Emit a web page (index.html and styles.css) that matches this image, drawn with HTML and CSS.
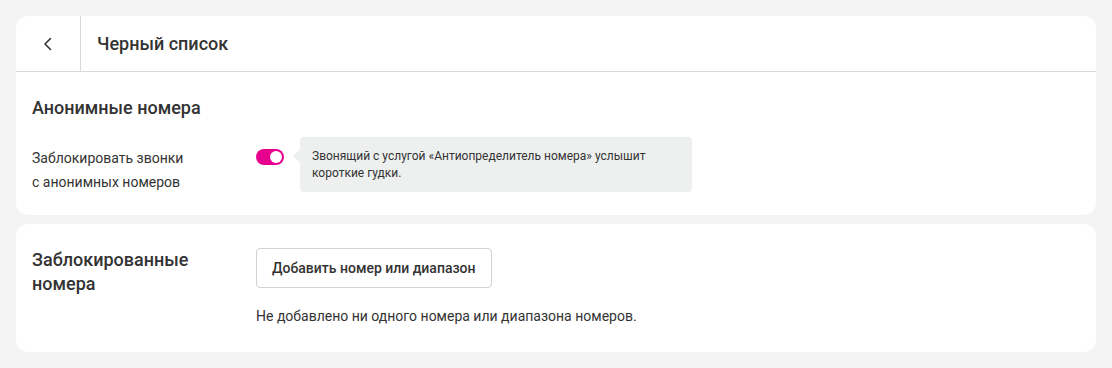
FILE: index.html
```html
<!DOCTYPE html>
<html lang="ru">
<head>
<meta charset="utf-8">
<link rel="stylesheet" href="styles.css">
</head>
<body>
<div class="page">
  <section class="card">
    <header class="card-head">
      <button class="back" aria-label="Назад">
        <svg width="16" height="16" viewBox="0 0 16 16"><path d="M10.5 2.5 L5 8 L10.5 13.5" fill="none" stroke="#333" stroke-width="1.6" stroke-linecap="round" stroke-linejoin="round"/></svg>
      </button>
      <h1 class="title">Черный список</h1>
    </header>
    <div class="card-body">
      <h2 class="section-title">Анонимные номера</h2>
      <div class="row">
        <div class="label">Заблокировать звонки<br>с анонимных номеров</div>
        <div class="control">
          <span class="toggle"><span class="knob"></span></span>
          <div class="hint">Звонящий с услугой «Антиопределитель номера» услышит<br>короткие гудки.</div>
        </div>
      </div>
    </div>
  </section>
  <section class="card card-blocked">
    <h2 class="section-title blocked-title">Заблокированные номера</h2>
    <div class="blocked-content">
      <button class="btn">Добавить номер или диапазон</button>
      <p class="empty">Не добавлено ни одного номера или диапазона номеров.</p>
    </div>
  </section>
</div>
</body>
</html>
```

FILE: styles.css
```css
* { box-sizing: border-box; }
html, body { margin: 0; padding: 0; }
body {
  background: #f2f3f2;
  font-family: Roboto, "Liberation Sans", Arial, sans-serif;
  color: #333;
}
.page {
  padding: 16px;
  display: flex;
  flex-direction: column;
  gap: 9px;
}
.card {
  background: #fff;
  border-radius: 12px;
}
.card-head {
  display: flex;
  align-items: stretch;
  height: 56px;
  border-bottom: 1px solid #d9d9d9;
}
.back {
  width: 65px;
  border: 0;
  border-right: 1px solid #d9d9d9;
  background: none;
  padding: 0;
  display: flex;
  align-items: center;
  justify-content: center;
  cursor: pointer;
}
.title {
  margin: 0;
  padding-left: 16px;
  font-size: 18px;
  font-weight: 500;
  line-height: 55px;
  color: #333;
}
.card-body {
  padding: 24px 16px 21px;
}
.section-title {
  margin: 0;
  font-size: 18px;
  font-weight: 500;
  line-height: 24px;
  color: #333;
}
.row {
  display: flex;
  margin-top: 17px;
}
.label {
  width: 224px;
  font-size: 14px;
  line-height: 24px;
  padding-top: 9px;
  color: #333;
}
.control {
  display: flex;
  align-items: flex-start;
}
.toggle {
  position: relative;
  width: 28px;
  height: 16px;
  border-radius: 8px;
  background: #e6008d;
  margin-top: 12px;
  margin-right: 16px;
}
.knob {
  position: absolute;
  right: 2px;
  top: 2px;
  width: 12px;
  height: 12px;
  border-radius: 50%;
  background: #fff;
}
.hint {
  position: relative;
  width: 392px;
  background: #eef0ef;
  border-radius: 4px;
  padding: 11px 12px 10px;
  font-size: 12px;
  line-height: 17px;
  color: #333;
}
.hint::before {
  content: "";
  position: absolute;
  left: -7px;
  top: 12px;
  border-top: 7px solid transparent;
  border-bottom: 7px solid transparent;
  border-right: 7px solid #eef0ef;
}
.card-blocked {
  display: flex;
  padding: 24px 16px 26px;
}
.blocked-title {
  width: 224px;
  padding-right: 40px;
}
.blocked-content {
  display: flex;
  flex-direction: column;
  align-items: flex-start;
}
.btn {
  height: 40px;
  padding: 0 15px;
  border: 1px solid #d2d2d2;
  border-radius: 4px;
  background: #fff;
  font-family: inherit;
  font-size: 14px;
  font-weight: 500;
  color: #333;
}
.empty {
  margin: 18px 0 0;
  font-size: 14px;
  line-height: 20px;
  color: #333;
}
```
